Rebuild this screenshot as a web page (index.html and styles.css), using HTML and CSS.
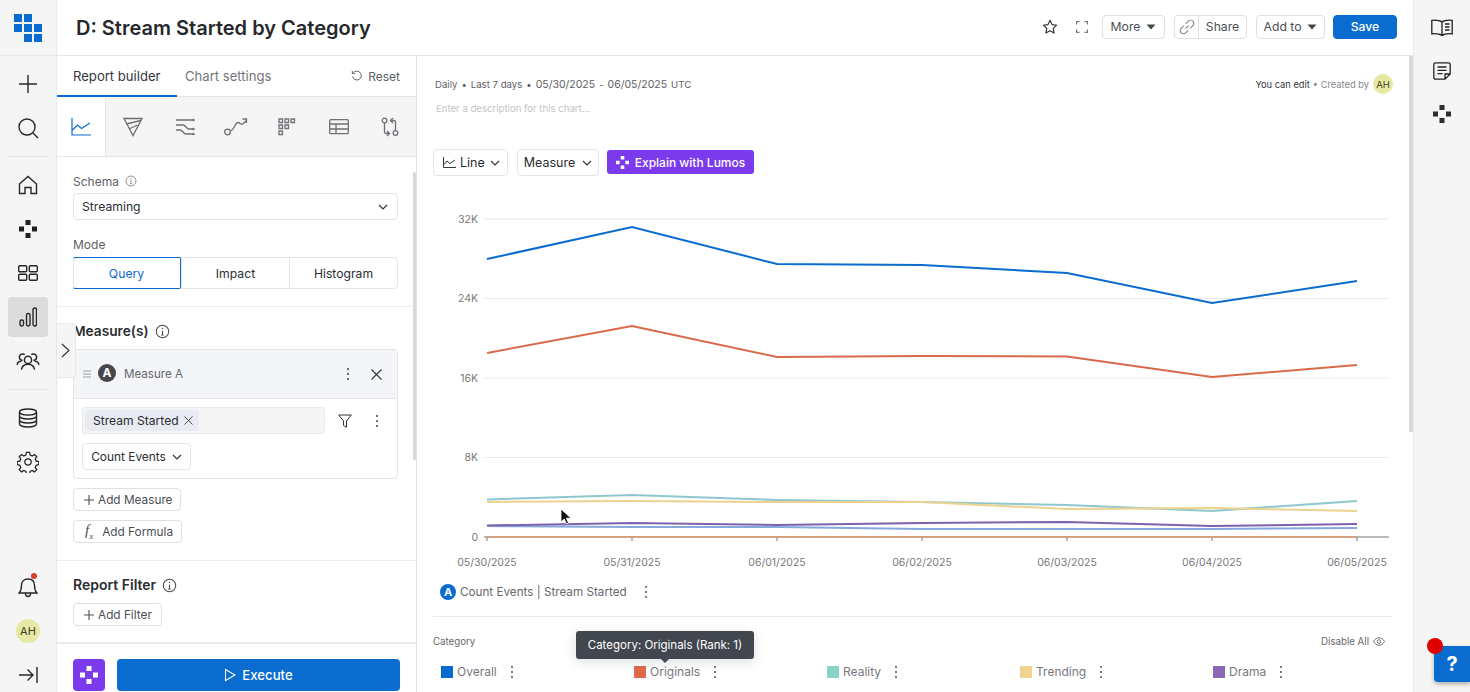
FILE: index.html
```html
<!DOCTYPE html>
<html lang="en">
<head>
<meta charset="utf-8">
<title>D: Stream Started by Category</title>
<link rel="stylesheet" href="styles.css">
</head>
<body>
<svg class="defs" aria-hidden="true">
  <defs>
    <symbol id="dots" viewBox="0 0 18 18"><path d="M6.5 0h5v5h-5zM0 6.5h5v5H0zM13 6.5h5v5h-5zM6.5 13h5v5h-5z" fill="currentColor"/></symbol>
    <symbol id="kebab" viewBox="0 0 4 14"><circle cx="2" cy="2" r="1.1" fill="currentColor"/><circle cx="2" cy="7" r="1.1" fill="currentColor"/><circle cx="2" cy="12" r="1.1" fill="currentColor"/></symbol>
    <symbol id="info" viewBox="0 0 14 14"><circle cx="7" cy="7" r="5.8" fill="none" stroke="currentColor"/><path d="M7 6.2v4M5.8 10.2h2.4" fill="none" stroke="currentColor"/><circle cx="7" cy="4.2" r=".7" fill="currentColor"/></symbol>
    <symbol id="chev" viewBox="0 0 10 6"><path d="M1 1l4 4 4-4" fill="none" stroke="currentColor" stroke-width="1.2"/></symbol>
    <symbol id="plus" viewBox="0 0 12 12"><path d="M6 1v10M1 6h10" fill="none" stroke="currentColor" stroke-width="1.1"/></symbol>
    <symbol id="caret" viewBox="0 0 10 6"><path d="M.5.5h9L5 5.5z" fill="currentColor"/></symbol>
  </defs>
</svg>

<div class="app">
  <nav class="rail">
    <div class="logo">
      <svg width="28" height="28" viewBox="0 0 28 28"><path d="M0 0h8v8H0zM10 0h8v8h-8zM0 10h8v8H0zM10 10h8v8h-8zM20 10h8v8h-8zM10 20h8v8h-8zM20 20h8v8h-8z" fill="#0a6ccf"/></svg>
    </div>
    <div class="rail-top">
      <div class="rail-item"><svg width="20" height="20" viewBox="0 0 20 20"><path d="M10 1v18M1 10h18" class="ln"/></svg></div>
      <div class="rail-item"><svg width="22" height="22" viewBox="0 0 22 22"><circle cx="10" cy="10" r="8" class="ln"/><path d="M16 16l5 5" class="ln"/></svg></div>
      <div class="rail-sep"></div>
      <div class="rail-item"><svg width="20" height="20" viewBox="0 0 20 20"><path d="M1.500 9L10 1.500 18.500 9v9.500h-5.500v-6h-6v6H1.500z" class="ln"/></svg></div>
      <div class="rail-item"><svg class="ink" width="18" height="18"><use href="#dots"/></svg></div>
      <div class="rail-item"><svg width="20" height="16" viewBox="0 0 20 16"><rect x=".7" y=".7" width="8" height="6" rx="1" class="ln"/><rect x="11.300" y=".7" width="8" height="6" rx="1" class="ln"/><rect x=".7" y="9.300" width="8" height="6" rx="1" class="ln"/><rect x="11.300" y="9.300" width="8" height="6" rx="1" class="ln"/></svg></div>
      <div class="rail-item"><div class="rail-active"><svg width="18" height="20" viewBox="0 0 18 20"><rect x="1" y="13" width="3.500" height="6" rx="1.700" class="ln"/><rect x="7.500" y="6.500" width="3.500" height="12.500" rx="1.700" class="ln"/><rect x="14" y="1" width="3.500" height="18" rx="1.700" class="ln"/></svg></div></div>
      <div class="rail-item"><svg width="24" height="20" viewBox="0 0 22 18"><circle cx="11" cy="8" r="3.300" class="ln"/><path d="M5 17c.5-3.500 3-5 6-5s5.500 1.500 6 5M6 8.500a3 3 0 1 1 2-5.300M16 8.500a3 3 0 1 0-2-5.300M1 12.500c.4-2 2-3.200 4-3.400M21 12.500c-.4-2-2-3.200-4-3.400" class="ln"/></svg></div>
      <div class="rail-sep"></div>
      <div class="rail-item"><svg width="20" height="20" viewBox="0 0 20 20"><ellipse cx="10" cy="4" rx="8.500" ry="3" class="ln"/><path d="M1.500 4v12c0 1.700 3.800 3 8.500 3s8.500-1.300 8.500-3V4M1.500 8c0 1.700 3.800 3 8.500 3s8.500-1.300 8.500-3M1.500 12c0 1.700 3.800 3 8.500 3s8.500-1.300 8.500-3" class="ln"/></svg></div>
      <div class="rail-item"><svg width="22" height="22" viewBox="0 0 24 24"><path d="M12 8.500a3.500 3.500 0 1 0 0 7 3.500 3.500 0 0 0 0-7z" class="ln"/><path d="M10.300 1.500h3.400l.6 2.900 2.300 1 2.500-1.600 2.400 2.400-1.600 2.500 1 2.300 2.900.6v3.400l-2.900.6-1 2.300 1.600 2.500-2.400 2.400-2.500-1.600-2.300 1-.6 2.900h-3.400l-.6-2.900-2.300-1-2.500 1.600-2.400-2.400 1.600-2.500-1-2.300-2.900-.6v-3.400l2.900-.6 1-2.300-1.600-2.500 2.400-2.400 2.500 1.600 2.300-1z" class="ln"/></svg></div>
    </div>
    <div class="rail-bottom">
      <div class="rail-item bell"><svg width="20" height="22" viewBox="0 0 20 22"><path d="M1 17c2-2 2.500-4 2.500-7.500C3.500 5.500 6 3 10 3s6.500 2.500 6.500 6.500c0 3.500.5 5.500 2.500 7.500zM7.500 17.500c0 2 1 3 2.500 3s2.500-1 2.500-3" class="ln"/></svg><span class="bell-dot"></span></div>
      <div class="rail-item"><span class="avatar">AH</span></div>
      <div class="rail-item"><svg width="20" height="18" viewBox="0 0 20 18"><path d="M1 9h14M9.500 3.500L15 9l-5.500 5.500M19 1v16" class="ln"/></svg></div>
    </div>
  </nav>

  <div class="center">
    <header class="header">
      <h1 class="title">D: Stream Started by Category</h1>
      <div class="actions">
        <svg class="star" width="16" height="16" viewBox="0 0 16 16"><path d="M8 1.300l2 4.300 4.700.6-3.500 3.200.9 4.700L8 11.800l-4.100 2.300.9-4.700L1.300 6.200 6 5.600z" fill="none" stroke="#2b2d31" stroke-width="1.100" stroke-linejoin="round"/></svg>
        <svg class="expand" width="12" height="12" viewBox="0 0 12 12"><path d="M.6 3.500V.6h2.900M8.500.6h2.900v2.900M11.400 8.500v2.900H8.500M3.500 11.400H.6V8.500" fill="none" stroke="#77797e" stroke-width="1.200"/></svg>
        <button class="btn more">More <svg class="caret" width="10" height="6"><use href="#caret"/></svg></button>
        <div class="share"><span class="share-link"><svg width="18" height="18" viewBox="0 0 16 16"><path d="M6.500 9.500l3-3M5 7L2.800 9.200a2.800 2.800 0 0 0 4 4L9 11M7 5l2.200-2.200a2.800 2.800 0 0 1 4 4L11 9" fill="none" stroke="#85878c" stroke-width="1"/></svg></span><span class="share-text">Share</span></div>
        <button class="btn addto">Add to <svg class="caret" width="10" height="6"><use href="#caret"/></svg></button>
        <button class="btn save">Save</button>
      </div>
    </header>

    <div class="body">
      <aside class="side">
        <div class="tabs">
          <span class="tab tab-on">Report builder</span>
          <span class="tab tab-off">Chart settings</span>
          <span class="reset"><svg width="12" height="12" viewBox="0 0 12 12"><path d="M2.200 3.200A4.400 4.400 0 1 1 1.600 6.500M1.300 1v2.500h2.500" fill="none" stroke="#5e6066" stroke-width="1"/></svg>Reset</span>
        </div>
        <div class="types">
          <span class="type type-on"><svg width="20" height="18" viewBox="0 0 20 18"><path d="M1 0v17h19M1.500 12l5-5 4 3.500L19 5" fill="none" stroke="#0a6ccf" stroke-width="1.200"/></svg></span>
          <span class="type"><svg width="20" height="20" viewBox="0 0 20 20"><path d="M1 1.500h18l-9 17zM3.500 7L17.500 3.500M6 12l8.500-4" class="tl"/></svg></span>
          <span class="type"><svg width="20" height="18" viewBox="0 0 20 18"><path d="M1 2h17M1 7h7c3 0 3 4 6 4h4M1 12h4c3 0 3 4 6 4h7" class="tl"/><circle cx="18.500" cy="2" r="1.200" fill="#6e7075"/><circle cx="18.500" cy="11" r="1.200" fill="#6e7075"/><circle cx="18.500" cy="16" r="1.200" fill="#6e7075"/></svg></span>
          <span class="type"><svg width="24" height="18" viewBox="0 0 24 18"><circle cx="3.500" cy="14" r="2.800" class="tl"/><path d="M6.300 13c3-1 3.500-3 5-6s3-3 5-1.500 3 .5 6-3M18.500 1h4v4" class="tl"/></svg></span>
          <span class="type"><svg width="18" height="18" viewBox="0 0 18 18"><path d="M1 1h3.500v3.500H1zM7 1h3.500v3.500H7zM13 1h3.500v3.500H13zM1 7h3.500v3.500H1zM7 7h3.500v3.500H7zM1 13h3.500v3.500H1z" class="tl"/></svg></span>
          <span class="type"><svg width="20" height="16" viewBox="0 0 20 16"><rect x=".7" y=".7" width="18.600" height="14" rx="1" class="tl"/><path d="M.7 5h18.600M.7 10h18.600M7 5v9.700" class="tl"/></svg></span>
          <span class="type"><svg width="18" height="20" viewBox="0 0 18 20"><circle cx="3.500" cy="3.500" r="2.300" class="tl"/><circle cx="14.500" cy="16" r="2.300" class="tl"/><path d="M3.500 6v9c0 1 .5 1.500 1.500 1.500h3M6 14l2.500 2.500L6 19M14.500 13.500V5c0-1-.5-1.500-1.500-1.500h-3M12 1L9.500 3.500 12 6" class="tl"/></svg></span>
        </div>
        <div class="scroll">
          <div class="group g-schema">
            <div class="lbl">Schema <svg class="i" width="14" height="14"><use href="#info"/></svg></div>
            <div class="select">Streaming <svg class="ch" width="10" height="6"><use href="#chev"/></svg></div>
            <div class="lbl lbl-mode">Mode</div>
            <div class="seg"><span class="seg-on">Query</span><span>Impact</span><span>Histogram</span></div>
          </div>
          <div class="group g-measure">
            <h2 class="h2 h2-m">Measure(s) <svg class="i2" width="15" height="15"><use href="#info"/></svg></h2>
            <div class="card">
              <div class="card-head">
                <svg class="grip" width="8" height="8" viewBox="0 0 8 8"><path d="M0 1h8M0 4h8M0 7h8" stroke="#9a9ca0" fill="none"/></svg>
                <span class="badge badge-dark">A</span>
                <span class="card-name">Measure A</span>
                <svg class="kb card-kb" width="4" height="14"><use href="#kebab"/></svg>
                <svg class="close" width="11" height="11" viewBox="0 0 11 11"><path d="M.5.5l10 10M10.500.5l-10 10" stroke="#33353a" stroke-width="1.100"/></svg>
              </div>
              <div class="card-body">
                <div class="ev-row">
                  <div class="ev-input"><span class="chip">Stream Started <svg width="9" height="9" viewBox="0 0 9 9"><path d="M.5.5l8 8M8.500.5l-8 8" stroke="#4a4c52"/></svg></span></div>
                  <svg class="filter" width="14" height="14" viewBox="0 0 14 14"><path d="M.7 1h12.600L8.500 7v6.300L5.500 11.500V7z" fill="none" stroke="#33353a" stroke-width="1"/></svg>
                  <svg class="kb ev-kb" width="4" height="14"><use href="#kebab"/></svg>
                </div>
                <div class="count">Count Events <svg class="ch" width="10" height="6"><use href="#chev"/></svg></div>
              </div>
            </div>
            <button class="add add-m"><svg width="12" height="12"><use href="#plus"/></svg>Add Measure</button>
            <button class="add add-f"><span class="fx">f<sub>x</sub></span>Add Formula</button>
          </div>
          <div class="group g-filter">
            <h2 class="h2">Report Filter <svg class="i2" width="15" height="15"><use href="#info"/></svg></h2>
            <button class="add add-r"><svg width="12" height="12"><use href="#plus"/></svg>Add Filter</button>
          </div>
          <span class="sbar"></span>
        </div>
        <div class="foot">
          <span class="lumos"><svg width="18" height="18"><use href="#dots"/></svg></span>
          <button class="exec"><svg width="12" height="14" viewBox="0 0 12 14"><path d="M1.500 1.500v11L11 7z" fill="none" stroke="#fff" stroke-width="1.100"/></svg>Execute</button>
        </div>
      </aside>

      <main class="main">
        <div class="meta">
          <span class="meta-left"><span>Daily</span><span>•</span><span>Last 7 days</span><span>•</span><span class="date">05/30/2025</span><span>-</span><span class="date">06/05/2025</span><span>UTC</span></span>
          <span class="meta-right"><b>You can edit</b> • Created by <span class="avatar">AH</span></span>
        </div>
        <div class="desc">Enter a description for this chart...</div>
        <div class="controls">
          <button class="ctl ctl-line"><svg width="13" height="11" viewBox="0 0 13 11"><path d="M.5 0v10.500H13M1 7.500L4 4l3 2.500L12 3" fill="none" stroke="#33353a"/></svg>Line <svg class="ch" width="10" height="6"><use href="#chev"/></svg></button>
          <button class="ctl ctl-measure">Measure <svg class="ch" width="10" height="6"><use href="#chev"/></svg></button>
          <button class="explain"><svg width="13" height="13"><use href="#dots"/></svg>Explain with Lumos</button>
        </div>
        <svg class="chart" width="976" height="381" viewBox="433 190 976 381">
          <g class="grid">
            <path d="M484 219H1389M484 298.500H1389M484 378H1389M484 457.500H1389"/>
          </g>
          <path class="axis" d="M484 537H1389M487 537v4M632 537v4M777 537v4M922 537v4M1067 537v4M1212 537v4M1357 537v4"/>
          <g class="yl">
            <text x="478" y="223">32K</text><text x="478" y="302">24K</text><text x="478" y="382">16K</text><text x="478" y="461">8K</text><text x="478" y="541">0</text>
          </g>
          <polyline class="s" stroke="#8fc7cf" points="487,499.500 632,495 777,500 922,502 1067,505 1212,511 1357,501"/>
          <polyline class="s" stroke="#ecd28e" points="487,502 632,501 777,502 922,502 1067,509 1212,508 1357,511"/>
          <polyline class="s" stroke="#86a8dc" points="487,526 632,527 777,527 922,529 1067,529 1212,529 1357,528"/>
          <polyline class="s" stroke="#7c62ad" points="487,525.500 632,523 777,525 922,523 1067,522 1212,526 1357,524"/>
          <polyline class="s" stroke="#d5a183" points="487,537 1357,537"/>
          <polyline class="s" stroke="#d9694a" points="487,353 632,326 777,357 922,356 1067,356.500 1212,377 1357,365"/>
          <polyline class="s" stroke="#0a6ccf" points="487,259 632,227 777,264 922,265 1067,273 1212,303 1357,281"/>
          <g class="xl">
            <text x="487" y="566">05/30/2025</text><text x="632" y="566">05/31/2025</text><text x="777" y="566">06/01/2025</text><text x="922" y="566">06/02/2025</text><text x="1067" y="566">06/03/2025</text><text x="1212" y="566">06/04/2025</text><text x="1357" y="566">06/05/2025</text>
          </g>
        </svg>
        <div class="series">
          <span class="badge badge-blue">A</span>
          <span class="series-name">Count Events | Stream Started</span>
          <svg class="kb" width="4" height="14"><use href="#kebab"/></svg>
        </div>
        <div class="legend-head">
          <span>Category</span>
          <span class="disable">Disable All <svg width="12" height="9" viewBox="0 0 12 9"><path d="M.5 4.500C2 2 4 .7 6 .7s4 1.300 5.500 3.800C10 7 8 8.300 6 8.300S2 7 .5 4.500z" fill="none" stroke="#5e6066" stroke-width=".9"/><circle cx="6" cy="4.500" r="1.800" fill="none" stroke="#5e6066" stroke-width=".9"/></svg></span>
        </div>
        <div class="legend">
          <span class="li"><i class="sw sw-1"></i>Overall<svg class="kb" width="4" height="14"><use href="#kebab"/></svg></span>
          <span class="li"><i class="sw sw-2"></i>Originals<svg class="kb" width="4" height="14"><use href="#kebab"/></svg></span>
          <span class="li"><i class="sw sw-3"></i>Reality<svg class="kb" width="4" height="14"><use href="#kebab"/></svg></span>
          <span class="li"><i class="sw sw-4"></i>Trending<svg class="kb" width="4" height="14"><use href="#kebab"/></svg></span>
          <span class="li"><i class="sw sw-5"></i>Drama<svg class="kb" width="4" height="14"><use href="#kebab"/></svg></span>
        </div>
        <span class="msbar"></span>
      </main>
    </div>
  </div>

  <aside class="rrail">
    <svg width="22" height="18" viewBox="0 0 22 18"><path d="M11 3C9 1.500 5 1 .8 1.300v13.500C5 14.500 9 15 11 16.500 13 15 17 14.500 21.200 14.800V1.300C17 1 13 1.500 11 3zM11 3v13.500M14 5h4.500M14 8h4.500M14 11h4.500" fill="none" stroke="#1f2024" stroke-width="1.300"/></svg>
    <svg width="18" height="18" viewBox="0 0 18 18"><path d="M2.500.8h13c1 0 1.700.7 1.700 1.700v9.500L12 17.200H2.500c-1 0-1.700-.7-1.700-1.700v-13C.8 1.500 1.500.8 2.500.8zM12 17v-5h5M4.500 5h9M4.500 8.300h9M4.500 11.600h5" fill="none" stroke="#1f2024" stroke-width="1.300"/></svg>
    <svg width="18" height="18"><use href="#dots"/></svg>
  </aside>

  <div class="collapse"><svg width="9" height="15" viewBox="0 0 9 15"><path d="M1 1l7 6.500L1 14" fill="none" stroke="#2b2d31" stroke-width="1.100"/></svg></div>
  <div class="tooltip">Category: Originals (Rank: 1)</div>
  <div class="help">?</div>
  <span class="reddot"></span>
  <svg class="cursor" width="12" height="17" viewBox="0 0 12 17"><path d="M1 1v13l3.300-3 2.200 5 2-.9-2.200-4.900H11z" fill="#111" stroke="#fff" stroke-width=".8"/></svg>
</div>
</body>
</html>
```
FILE: styles.css
```css
* { box-sizing: border-box; }
html, body { margin: 0; height: 692px; overflow: hidden; background: #fff; }
body { font-family: Inter, "Liberation Sans", sans-serif; font-size: 12px; color: #2b2d31; }
button { font: inherit; background: #fff; cursor: pointer; white-space: nowrap; }
.defs { position: absolute; width: 0; height: 0; }
.app { position: relative; display: grid; grid-template-columns: 57px 1fr 57px; width: 1470px; height: 692px; overflow: hidden; }

/* left rail */
.rail { background: #f5f5f6; border-right: 1px solid #e7e8ea; height: 692px; display: flex; flex-direction: column; overflow: hidden; }
.logo { height: 56px; flex: none; display: flex; align-items: center; justify-content: center; border-bottom: 1px solid #e7e8ea; }
.rail-top { padding-top: 6px; }
.rail-bottom { margin-top: 81px; }
.rail-item { position: relative; height: 44px; display: flex; align-items: center; justify-content: center; color: #1f2024; }
.rail-sep { height: 13px; position: relative; }
.rail-sep::after { content: ""; position: absolute; left: 8px; right: 8px; top: 6px; border-top: 1px solid #e4e5e7; }
.rail-active { width: 40px; height: 40px; border-radius: 4px; background: #dcdcdd; display: flex; align-items: center; justify-content: center; }
.ln { fill: none; stroke: #26272b; stroke-width: 1.400; }
.ink { color: #1f2024; }
.bell-dot { position: absolute; top: 8px; left: 31px; width: 6px; height: 6px; border-radius: 50%; background: #d6402f; }
.avatar { display: inline-flex; align-items: center; justify-content: center; width: 24px; height: 24px; border-radius: 50%; background: #e6e9a4; color: #3c3d22; font-size: 11px; }

/* centre */
.center { display: flex; flex-direction: column; min-width: 0; height: 692px; }
.header { height: 56px; flex: none; display: flex; align-items: center; justify-content: space-between; border-bottom: 1px solid #e4e5e7; padding: 0 16px 2px 19px; }
.title { margin: 2px 0 0; font-size: 20px; font-weight: 600; color: #27282b; }
.actions { display: flex; align-items: center; }
.star { margin-right: 18px; }
.expand { margin-right: 14px; }
.btn { height: 24px; border: 1px solid #dfe0e3; border-radius: 4px; color: #4c4e54; font-size: 12.200px; display: inline-flex; align-items: center; justify-content: center; gap: 6px; padding: 0; }
.caret { color: #45474c; }
.more { width: 63px; margin-right: 9px; }
.addto { width: 69px; margin: 0 8px 0 9px; }
.save { width: 64px; background: #0a6ccf; border-color: #0a6ccf; color: #fff; font-weight: 500; }
.share { width: 73px; height: 24px; border: 1px solid #dfe0e3; border-radius: 4px; display: flex; align-items: center; font-size: 12.200px; color: #4c4e54; }
.share-link { width: 24px; height: 100%; display: flex; align-items: center; justify-content: center; border-right: 1px solid #dfe0e3; }
.share-text { flex: 1; text-align: center; }

.body { flex: 1; display: flex; min-height: 0; }

/* sidebar */
.side { width: 360px; flex: none; border-right: 1px solid #e4e5e7; display: flex; flex-direction: column; min-height: 0; }
.tabs { height: 41px; flex: none; display: flex; align-items: center; border-bottom: 1px solid #e4e5e7; position: relative; }
.tab { font-size: 13.100px; height: 41px; line-height: 40px; }
.tab-on { width: 120px; padding-left: 16px; color: #35373c; border-bottom: 2px solid #0a6ccf; }
.tab-off { margin-left: 8px; color: #74767b; }
.reset { margin-left: auto; margin-right: 16px; color: #5e6066; font-size: 12px; display: inline-flex; gap: 5px; align-items: center; }
.types { height: 60px; flex: none; display: flex; background: #f5f5f6; border-bottom: 1px solid #e4e5e7; }
.type { width: 51.800px; display: flex; align-items: center; justify-content: center; padding-top: 1px; }
.type-on { background: #fff; width: 49px; border-right: 1px solid #e4e5e7; margin-right: 2px; }
.tl { fill: none; stroke: #6e7075; stroke-width: 1.300; }
.scroll { flex: 1; min-height: 0; position: relative; overflow: hidden; }
.group { padding: 0 18px 0 16px; border-bottom: 1px solid #ecedef; }
.g-schema { height: 150px; padding-top: 16px; }
.lbl { font-size: 12px; color: #5e6066; height: 16px; display: flex; align-items: center; gap: 6px; }
.i { color: #7c7e83; width: 12px; height: 12px; }
.lbl-mode { margin-top: 16px; }
.select { height: 27px; margin-top: 4px; border: 1px solid #e4e5e7; border-radius: 4px; padding: 0 9px 0 8px; display: flex; align-items: center; justify-content: space-between; font-size: 12.200px; }
.ch { color: #33353a; }
.seg { display: flex; height: 32px; margin-top: 5px; border: 1px solid #e4e5e7; border-radius: 4px; font-size: 12.200px; }
.seg span { flex: 1; display: flex; align-items: center; justify-content: center; border-left: 1px solid #e4e5e7; }
.seg span:first-child { border-left: 0; }
.seg .seg-on { flex: none; width: 108px; margin: -1px 0 -1px -1px; border: 1px solid #0a6ccf; border-radius: 2px; color: #0a6ccf; }
.g-measure { height: 254px; padding-top: 15px; }
.h2 { margin: 0; font-size: 14px; font-weight: 600; line-height: 18px; display: flex; align-items: center; gap: 6px; color: #2b2d31; }
.h2-m { font-size: 13.700px; }
.i2 { color: #4a4c52; }
.card { margin-top: 9px; height: 130px; border: 1px solid #e4e5e7; border-radius: 4px; }
.card-head { height: 49px; background: #f4f5f8; border-bottom: 1px solid #e4e5e7; display: flex; align-items: center; padding: 0 15px 0 9px; }
.grip { margin-right: 7px; }
.badge { display: inline-flex; align-items: center; justify-content: center; border-radius: 50%; color: #fff; font-weight: 700; }
.badge-dark { width: 18px; height: 18px; background: #45474c; font-size: 12px; margin-top: -3px; }
.card-name { margin-left: 8px; color: #66686d; font-size: 11.600px; }
.card-kb { margin-left: auto; color: #4c4e54; }
.close { margin-left: 21px; }
.card-body { padding: 8px 8px; }
.ev-row { display: flex; align-items: center; }
.ev-input { width: 243px; height: 27px; background: #f5f5f6; border: 1px solid #e7e8ea; border-radius: 3px; padding: 2px; display: flex; }
.chip { background: #e8ebf1; border-radius: 3px; padding: 0 6px 0 8px; display: inline-flex; align-items: center; gap: 5px; font-size: 12.100px; }
.filter { margin-left: 13px; }
.ev-kb { margin-left: 23px; color: #4c4e54; }
.count { width: 109px; height: 27px; margin-top: 9px; border: 1px solid #e4e5e7; border-radius: 4px; display: flex; align-items: center; gap: 6px; justify-content: center; font-size: 11.900px; }
.add { display: flex; align-items: center; height: 23px; border: 1px solid #dfe0e3; border-radius: 4px; color: #4c4e54; font-size: 11.800px; gap: 3px; padding: 0 0 0 9px; }
.add-m { width: 108px; margin-top: 9px; }
.add-f { width: 109px; margin-top: 9px; padding-left: 11px; gap: 9px; }
.add-r { width: 89px; margin-top: 9px; }
.fx { font-family: "Liberation Serif", serif; font-style: italic; font-size: 15px; line-height: 1; }
.fx sub { font-size: 9px; }
.g-filter { height: 82px; padding-top: 15px; }
.sbar { position: absolute; right: 0; top: 15px; width: 3px; height: 288px; background: #d8d9db; border-radius: 2px; }
.foot { height: 49px; flex: none; border-top: 1px solid #e4e5e7; display: flex; align-items: flex-start; padding: 15px 16px 0; gap: 12px; }
.lumos { width: 32px; height: 32px; border-radius: 4px; background: #7c3aed; color: #fff; display: flex; align-items: center; justify-content: center; }
.exec { width: 283px; height: 32px; border: 0; border-radius: 4px; background: #0a6ccf; color: #fff; font-size: 13.200px; font-weight: 500; display: flex; align-items: center; justify-content: center; gap: 6px; }

/* main */
.main { flex: 1; min-width: 0; position: relative; padding: 0 0 0 16px; overflow: hidden; }
.meta { display: flex; justify-content: space-between; align-items: center; height: 24px; margin-top: 16px; padding: 0 20px 0 2px; color: #5e6066; }
.meta-left { display: inline-flex; align-items: center; gap: 4px; font-size: 9.600px; }
.date { font-size: 10.500px; }
.meta-right { color: #85878c; display: inline-flex; gap: 3px; align-items: center; font-size: 9.300px; }
.meta-right b { font-weight: 400; color: #35373c; }
.meta-right .avatar { width: 20px; height: 20px; font-size: 9.500px; margin-left: 1px; }
.desc { margin-top: 5px; padding-left: 3px; font-size: 9.600px; height: 16px; line-height: 16px; color: #c3c4c7; }
.controls { display: flex; align-items: center; gap: 9px; margin-top: 32px; height: 27px; }
.ctl { height: 27px; border: 1px solid #e4e5e7; border-radius: 4px; display: inline-flex; align-items: center; justify-content: center; gap: 6px; font-size: 12.500px; color: #2b2d31; padding: 0; }
.ctl-line { width: 75px; justify-content: flex-start; padding-left: 9px; gap: 4px; }
.ctl-line .ch { margin-left: 1px; }
.ctl-measure { width: 82px; gap: 7px; }
.explain { height: 24px; width: 147px; border: 0; border-radius: 3px; background: #7c3aed; color: #fff; font-size: 12px; font-weight: 500; display: inline-flex; align-items: center; justify-content: center; gap: 6px; padding: 0; margin: -1px 0 0 -1px; }
.chart { display: block; margin-top: 14px; }
.grid path { fill: none; stroke: #e9eaec; stroke-width: 1; }
.axis { fill: none; stroke: #777; stroke-width: 1; }
.yl text { font-size: 10.500px; fill: #77797e; text-anchor: end; }
.xl text { font-size: 10.500px; fill: #77797e; text-anchor: middle; }
.s { fill: none; stroke-width: 2; }
.series { display: flex; align-items: center; height: 43px; margin-top: 3px; padding: 0 0 7px 7px; width: 960px; border-bottom: 1px solid #e9eaec; }
.badge-blue { width: 16px; height: 16px; background: #0a6ccf; font-size: 11px; }
.series-name { margin-left: 4px; font-size: 11.700px; color: #66686d; }
.series .kb { margin-left: 17px; color: #5e6066; }
.legend-head { display: flex; justify-content: space-between; align-items: center; width: 952px; height: 16px; margin-top: 16px; font-size: 9.700px; color: #66686d; }
.disable { display: inline-flex; align-items: center; gap: 4px; }
.legend { display: grid; grid-template-columns: repeat(5, 193px); margin-top: 15px; height: 14px; }
.li { display: flex; align-items: center; padding-left: 8px; font-size: 12px; color: #77797e; }
.li .kb { margin-left: 13px; color: #5e6066; }
.sw { width: 12px; height: 12px; margin-right: 4px; }
.sw-1 { background: #0a6ccf; }
.sw-2 { background: #de6a48; }
.sw-3 { background: #89d2c9; }
.sw-4 { background: #f2d28f; }
.sw-5 { background: #8a68b8; }
.msbar { position: absolute; top: 0; right: 0; width: 4px; height: 376px; background: #d8d9db; }

/* right rail */
.rrail { background: #f5f5f6; border-left: 1px solid #e7e8ea; display: flex; flex-direction: column; align-items: center; padding-top: 19px; gap: 25px; }

/* overlays */
.collapse { position: absolute; left: 57px; top: 323px; width: 19px; height: 55px; background: #f5f5f6; border: 1px solid #e7e8ea; border-left: 0; border-radius: 0 4px 4px 0; display: flex; align-items: center; justify-content: center; padding-right: 1px; }
.tooltip { position: absolute; left: 576px; top: 631px; width: 178px; height: 28px; background: #41464f; border-radius: 3px; color: #fff; font-size: 11.500px; display: flex; align-items: center; justify-content: center; box-shadow: 0 3px 12px rgba(60,70,90,.18); }
.tooltip::after { content: ""; position: absolute; left: 85px; bottom: -4px; border: 4px solid transparent; border-top-color: #41464f; border-bottom: 0; }
.help { position: absolute; left: 1434px; top: 646px; width: 36px; height: 36px; background: #0a6ccf; border-radius: 4px 0 0 4px; color: #fff; font-size: 20px; font-weight: 700; display: flex; align-items: center; justify-content: center; box-shadow: 0 2px 4px rgba(0,0,0,.3); }
.reddot { position: absolute; left: 1427px; top: 638px; width: 16px; height: 16px; border-radius: 50%; background: #e00000; }
.cursor { position: absolute; left: 560px; top: 508px; }
```
